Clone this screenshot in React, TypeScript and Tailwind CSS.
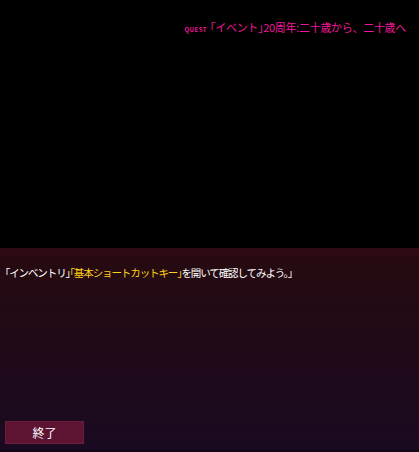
export default function App() {
    return (
        <div className="w-[419px] h-[452px] flex flex-col bg-black overflow-hidden" style={{ fontFamily: '"Noto Sans CJK JP", "Noto Sans", sans-serif' }}>
            {/* quest title */}
            <div className="h-[248px] flex justify-end items-start pt-[20px] pr-[13px]">
                <div className="flex items-baseline text-[#f0189a] text-[11px] leading-[14px] tracking-[-0.3px]">
                    <span className="text-[6px] font-bold mr-[3px] tracking-[0.5px]">QUEST</span>
                    <span>｢イベント｣20周年:二十歳から、二十歳へ</span>
                </div>
            </div>
            {/* dialog panel */}
            <div className="flex-1 flex flex-col">
                <div className="h-[8px] bg-[#2c0b12]" />
                <div className="flex-1 flex flex-col bg-gradient-to-b from-[#260a10] to-[#1a0a21]">
                    <p className="pt-[10px] pl-[5px] text-[10.5px] leading-[14px] text-white tracking-[-1.1px]">
                        ｢インベントリ｣<span className="text-[#ffd21a]">｢基本ショートカットキー｣</span>を開いて確認してみよう。｣
                    </p>
                    <div className="flex-1" />
                    <div className="pl-[5px] pb-[5px]">
                        <button className="w-[79px] h-[23px] bg-[#5c1432] border border-[#6e1c3c] text-white text-[12px] leading-none">
                            終了
                        </button>
                    </div>
                </div>
                <div className="h-[3px] bg-[#130818]" />
            </div>
        </div>
    );
}
